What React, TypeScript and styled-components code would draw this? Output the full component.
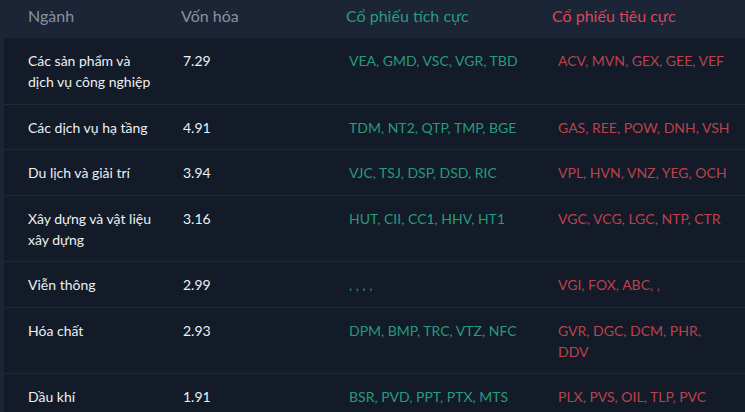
import React from "react";
import styled, { createGlobalStyle } from "styled-components";

interface SectorRow {
	name: string;
	cap: string;
	positive: string;
	negative: string;
}

const rows: SectorRow[] = [
	{ name: "Các sản phẩm và dịch vụ công nghiệp", cap: "7.29", positive: "VEA, GMD, VSC, VGR, TBD", negative: "ACV, MVN, GEX, GEE, VEF" },
	{ name: "Các dịch vụ hạ tầng", cap: "4.91", positive: "TDM, NT2, QTP, TMP, BGE", negative: "GAS, REE, POW, DNH, VSH" },
	{ name: "Du lịch và giải trí", cap: "3.94", positive: "VJC, TSJ, DSP, DSD, RIC", negative: "VPL, HVN, VNZ, YEG, OCH" },
	{ name: "Xây dựng và vật liệu xây dựng", cap: "3.16", positive: "HUT, CII, CC1, HHV, HT1", negative: "VGC, VCG, LGC, NTP, CTR" },
	{ name: "Viễn thông", cap: "2.99", positive: ", , , ,", negative: "VGI, FOX, ABC, ," },
	{ name: "Hóa chất", cap: "2.93", positive: "DPM, BMP, TRC, VTZ, NFC", negative: "GVR, DGC, DCM, PHR, DDV" },
	{ name: "Dầu khí", cap: "1.91", positive: "BSR, PVD, PPT, PTX, MTS", negative: "PLX, PVS, OIL, TLP, PVC" },
];

const GlobalStyle = createGlobalStyle`
	html, body {
		margin: 0;
		padding: 0;
		background: #1b2536;
		font-family: Lato, "Noto Sans", sans-serif;
	}
`;

export default function App() {
	return (
		<>
			<GlobalStyle />
			<Wrapper>
				<HeaderRow>
					<HeadCell>Ngành</HeadCell>
					<HeadCell>Vốn hóa</HeadCell>
					<HeadCell $tone="up">Cổ phiếu tích cực</HeadCell>
					<HeadCell $tone="down">Cổ phiếu tiêu cực</HeadCell>
				</HeaderRow>
				<Body>
					{rows.map((row) => (
						<Row key={row.name}>
							<NameCell>{row.name}</NameCell>
							<Cell>{row.cap}</Cell>
							<Cell $tone="up">{row.positive}</Cell>
							<Cell $tone="down">{row.negative}</Cell>
						</Row>
					))}
				</Body>
			</Wrapper>
		</>
	);
}

type Tone = "up" | "down";

const Wrapper = styled.div`
	width: 745px;
	height: 412px;
	overflow: hidden;
	background: #1b2536;
`;

const HeaderRow = styled.div`
	display: grid;
	grid-template-columns: 153px 165px 206px 1fr;
	height: 38px;
	box-sizing: border-box;
	padding: 5px 0 0 28px;
	line-height: 22px;
`;

const HeadCell = styled.div<{ $tone?: Tone }>`
	font-size: 16px;
	color: ${({ $tone }) => ($tone === "up" ? "#2a9b7f" : $tone === "down" ? "#d9475a" : "#8791a2")};
`;

const Body = styled.div`
	margin-left: 4px;
	background: #121b27;
`;

const Row = styled.div`
	display: grid;
	grid-template-columns: 155px 166px 209px 174px;
	padding: 12px 0 11.5px 24px;
	border-top: 1px solid #1e2a3b;
	font-size: 14px;
	line-height: 21px;

	&:first-child {
		border-top: none;
	}
`;

const Cell = styled.div<{ $tone?: Tone }>`
	color: ${({ $tone }) => ($tone === "up" ? "#279a7e" : $tone === "down" ? "#bc414e" : "#edf0f4")};
`;

const NameCell = styled(Cell)`
	padding-right: 26px;
`;
